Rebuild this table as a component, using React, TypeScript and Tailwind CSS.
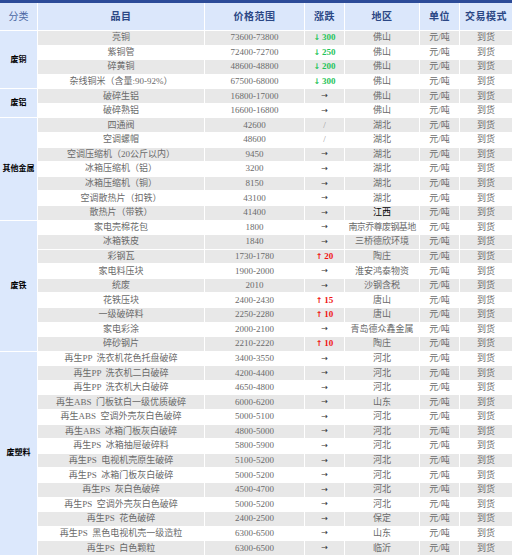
type Row = {
  name: string;
  price: string;
  change: string;
  area: string;
};

const groups: { label: string; rows: Row[] }[] = [
  {
    label: '废铜',
    rows: [
      { name: '亮铜', price: '73600-73800', change: '↓300', area: '佛山' },
      { name: '紫铜管', price: '72400-72700', change: '↓250', area: '佛山' },
      { name: '碎黄铜', price: '48600-48800', change: '↓200', area: '佛山' },
      { name: '杂线铜米（含量:90-92%）', price: '67500-68000', change: '↓300', area: '佛山' },
    ],
  },
  {
    label: '废铝',
    rows: [
      { name: '破碎生铝', price: '16800-17000', change: '→', area: '佛山' },
      { name: '破碎熟铝', price: '16600-16800', change: '→', area: '佛山' },
    ],
  },
  {
    label: '其他金属',
    rows: [
      { name: '四通阀', price: '42600', change: '/', area: '湖北' },
      { name: '空调螺帽', price: '48600', change: '/', area: '湖北' },
      { name: '空调压缩机（20公斤以内）', price: '9450', change: '→', area: '湖北' },
      { name: '冰箱压缩机（铝）', price: '3200', change: '→', area: '湖北' },
      { name: '冰箱压缩机（铜）', price: '8150', change: '→', area: '湖北' },
      { name: '空调散热片（扣铁）', price: '43100', change: '→', area: '湖北' },
      { name: '散热片（带铁）', price: '41400', change: '→', area: '江西' },
    ],
  },
  {
    label: '废铁',
    rows: [
      { name: '家电壳棉花包', price: '1800', change: '→', area: '南京乔尊废钢基地' },
      { name: '冰箱铁皮', price: '1840', change: '→', area: '三桥德欣环境' },
      { name: '彩钢瓦', price: '1730-1780', change: '↑20', area: '陶庄' },
      { name: '家电料压块', price: '1900-2000', change: '→', area: '淮安鸿泰物资' },
      { name: '统废', price: '2010', change: '→', area: '沙钢含税' },
      { name: '花铁压块', price: '2400-2430', change: '↑15', area: '唐山' },
      { name: '一级破碎料', price: '2250-2280', change: '↑10', area: '唐山' },
      { name: '家电彩涂', price: '2000-2100', change: '→', area: '青岛德众鑫金属' },
      { name: '碎砂钢片', price: '2210-2220', change: '↑10', area: '陶庄' },
    ],
  },
  {
    label: '废塑料',
    rows: [
      { name: '再生PP 洗衣机花色托盘破碎', price: '3400-3550', change: '→', area: '河北' },
      { name: '再生PP 洗衣机二白破碎', price: '4200-4400', change: '→', area: '河北' },
      { name: '再生PP 洗衣机大白破碎', price: '4650-4800', change: '→', area: '河北' },
      { name: '再生ABS 门板钛白一级优质破碎', price: '6000-6200', change: '→', area: '山东' },
      { name: '再生ABS 空调外壳灰白色破碎', price: '5000-5100', change: '→', area: '河北' },
      { name: '再生ABS 冰箱门板灰白破碎', price: '4800-5000', change: '→', area: '河北' },
      { name: '再生PS 冰箱抽屉破碎料', price: '5800-5900', change: '→', area: '河北' },
      { name: '再生PS 电视机壳原生破碎', price: '5100-5200', change: '→', area: '河北' },
      { name: '再生PS 冰箱门板灰白破碎', price: '5000-5200', change: '→', area: '河北' },
      { name: '再生PS 灰白色破碎', price: '4500-4700', change: '→', area: '河北' },
      { name: '再生PS 空调外壳灰白色破碎', price: '5000-5200', change: '→', area: '河北' },
      { name: '再生PS 花色破碎', price: '2400-2500', change: '→', area: '保定' },
      { name: '再生PS 黑色电视机壳一级造粒', price: '6300-6500', change: '→', area: '山东' },
      { name: '再生PS 白色颗粒', price: '6300-6500', change: '→', area: '临沂' },
    ],
  },
];

const headers = ['品目', '价格范围', '涨跌', '地区', '单位', '交易模式'];

// striping in the screenshot slips by one row inside 废铁
function isGray(i: number) {
  return i < 15 ? i % 2 === 0 : i % 2 === 1;
}

function Change({ value }: { value: string }) {
  if (value.startsWith('↓')) {
    return (
      <span className="font-bold text-[#1fc45a]">
        <span className="mr-[2px] font-['DejaVu_Sans'] text-[8px]">↓</span>
        {value.slice(1)}
      </span>
    );
  }
  if (value.startsWith('↑')) {
    return (
      <span className="font-bold text-[#f01414]">
        <span className="mr-[2px] font-['DejaVu_Sans'] text-[8px]">↑</span>
        {value.slice(1)}
      </span>
    );
  }
  if (value === '/') return <span className="text-[#999]">/</span>;
  return <span className="font-['DejaVu_Sans'] text-[8px] text-[#333]">→</span>;
}

export default function App() {
  let idx = 0;
  return (
    <div className="h-[555px] w-[515px] overflow-hidden bg-white font-['Liberation_Serif','Noto_Sans_CJK_SC',serif]">
      <div className="h-[3px] w-[512px] bg-[#2c4b98]" />
      <div className="grid w-[512px] grid-cols-[37px_166px_99px_39px_74px_39px_52px] grid-rows-[27px_repeat(36,13.58px)] gap-x-px gap-y-px bg-white">
        <div className="flex items-center justify-center bg-[#dbe7fb] text-[10px] text-[#4a68a3]">分类</div>
        {headers.map((h) => (
          <div
            key={h}
            className="flex items-center justify-center bg-[#dbe7fb] text-[10px] font-semibold tracking-[0.5px] text-[#2b4785]"
          >
            {h}
          </div>
        ))}
        {groups.map((g, gi) => {
          const start = idx;
          idx += g.rows.length;
          return g.rows.map((r, ri) => {
            const i = start + ri;
            const bg = isGray(i) ? 'bg-[#e8e8e8]' : 'bg-white';
            const cell = `flex items-center justify-center whitespace-pre text-[9px] leading-none text-[#6a6a6a] ${bg}`;
            return [
              ri === 0 ? (
                <div
                  key={`c${gi}`}
                  className="flex items-center justify-center bg-[#dce8fc] text-[8px] font-bold text-black"
                  style={{ gridRow: `${i + 2} / span ${g.rows.length}`, gridColumn: '1' }}
                >
                  {g.label}
                </div>
              ) : null,
              <div key={`n${i}`} className={cell} style={{ gridRow: i + 2, gridColumn: 2 }}>
                {r.name.replace(' ', '  ')}
              </div>,
              <div key={`p${i}`} className={cell} style={{ gridRow: i + 2, gridColumn: 3 }}>
                {r.price}
              </div>,
              <div key={`d${i}`} className={cell} style={{ gridRow: i + 2, gridColumn: 4 }}>
                <Change value={r.change} />
              </div>,
              <div
                key={`a${i}`}
                className={`${cell} ${r.area === '江西' ? 'text-black' : ''} ${r.area.length > 7 ? 'tracking-[-0.6px]' : ''}`}
                style={{ gridRow: i + 2, gridColumn: 5 }}
              >
                {r.area}
              </div>,
              <div key={`u${i}`} className={cell} style={{ gridRow: i + 2, gridColumn: 6 }}>
                元/吨
              </div>,
              <div key={`m${i}`} className={cell} style={{ gridRow: i + 2, gridColumn: 7 }}>
                到货
              </div>,
            ];
          });
        })}
      </div>
    </div>
  );
}
